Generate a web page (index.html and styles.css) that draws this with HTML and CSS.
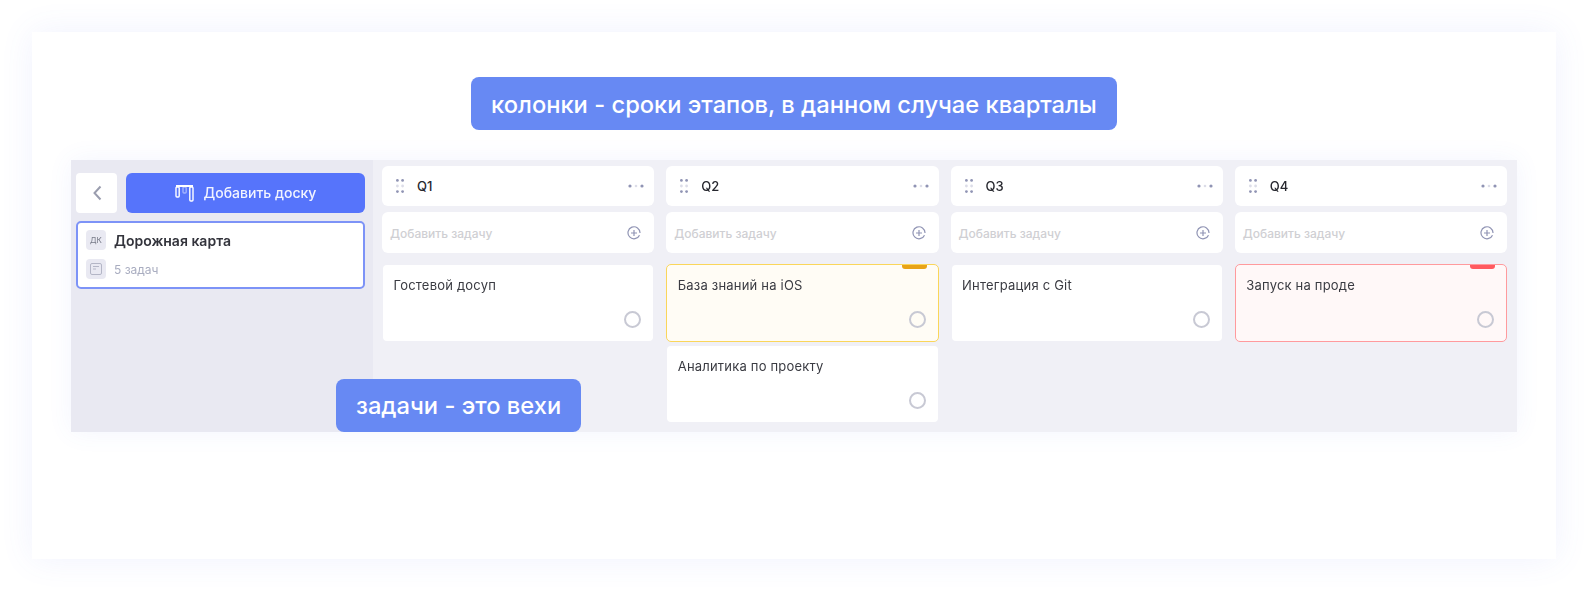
FILE: index.html
```html
<!DOCTYPE html>
<html lang="en">
  <head>
    <meta charset="UTF-8" />
    <meta name="viewport" content="width=device-width, initial-scale=1.0" />
    <title>Дорожная карта</title>
    <link rel="stylesheet" href="styles.css">
  </head>
  <body>
    <div class="canvas">
      <div class="note note-top">колонки - сроки этапов, в данном случае кварталы</div>
      <div class="board">
        <div class="sidebar">
          <div class="sidebar-top">
            <div class="back">
              <svg width="9" height="16" viewBox="0 0 9 16"><path d="M7.5 1.5 1.5 8l6 6.5" fill="none" stroke="#9a9dae" stroke-width="2"/></svg>
            </div>
            <div class="add-board">
              <svg width="19" height="18" viewBox="0 0 19 18" fill="none" stroke="#fff" stroke-width="1.4">
                <path d="M1 2h17" stroke-width="2"/>
                <rect x="1" y="3" width="3.2" height="10" rx="1"/>
                <rect x="14.8" y="3" width="3.2" height="14" rx="1"/>
                <rect x="8" y="3" width="3.2" height="6" rx="1" opacity=".45"/>
              </svg>
              <span class="add-board-label">Добавить доску</span>
            </div>
          </div>
          <div class="board-card">
            <div class="board-row">
              <span class="board-icon">ДК</span>
              <span class="board-name">Дорожная карта</span>
            </div>
            <div class="board-row">
              <span class="board-icon">
                <svg width="12" height="12" viewBox="0 0 12 12" fill="none" stroke="#b4b6c6"><rect x=".5" y=".5" width="11" height="11" rx="1.5"/><path d="M3 3.5h6M3 6h3"/></svg>
              </span>
              <span class="board-count">5 задач</span>
            </div>
          </div>
        </div>
        <div class="columns">
          <div class="column">
            <div class="col-head">
              <svg class="drag" width="8" height="14" viewBox="0 0 8 14"><g fill="#9094b4"><circle cx="1.4" cy="1.4" r="1.4"/><circle cx="6.6" cy="1.4" r="1.4"/><circle cx="1.4" cy="12.6" r="1.4"/><circle cx="6.6" cy="12.6" r="1.4"/></g><g fill="#dcdde8"><circle cx="1.4" cy="7" r="1.4"/><circle cx="6.6" cy="7" r="1.4"/></g></svg>
              <span class="col-title">Q1</span>
              <svg class="dots" width="16" height="4" viewBox="0 0 16 4"><circle cx="2" cy="2" r="1.6" fill="#9094b4"/><circle cx="8" cy="2" r="1.3" fill="#dcdde8"/><circle cx="14" cy="2" r="1.6" fill="#9094b4"/></svg>
            </div>
            <div class="add-task">
              <span>Добавить задачу</span>
              <svg width="14" height="14" viewBox="0 0 14 14" fill="none" stroke="#9094b4" stroke-width="1.2"><path d="M12.5 9.2A6 6 0 1 1 13 7M7 4v6M4 7h6"/></svg>
            </div>
            <div class="task">
              <span>Гостевой досуп</span>
              <i class="check"></i>
            </div>
          </div>
          <div class="column">
            <div class="col-head">
              <svg class="drag" width="8" height="14" viewBox="0 0 8 14"><g fill="#9094b4"><circle cx="1.4" cy="1.4" r="1.4"/><circle cx="6.6" cy="1.4" r="1.4"/><circle cx="1.4" cy="12.6" r="1.4"/><circle cx="6.6" cy="12.6" r="1.4"/></g><g fill="#dcdde8"><circle cx="1.4" cy="7" r="1.4"/><circle cx="6.6" cy="7" r="1.4"/></g></svg>
              <span class="col-title">Q2</span>
              <svg class="dots" width="16" height="4" viewBox="0 0 16 4"><circle cx="2" cy="2" r="1.6" fill="#9094b4"/><circle cx="8" cy="2" r="1.3" fill="#dcdde8"/><circle cx="14" cy="2" r="1.6" fill="#9094b4"/></svg>
            </div>
            <div class="add-task">
              <span>Добавить задачу</span>
              <svg width="14" height="14" viewBox="0 0 14 14" fill="none" stroke="#9094b4" stroke-width="1.2"><path d="M12.5 9.2A6 6 0 1 1 13 7M7 4v6M4 7h6"/></svg>
            </div>
            <div class="task task-yellow">
              <span>База знаний на iOS</span>
              <i class="check"></i>
            </div>
            <div class="task">
              <span>Аналитика по проекту</span>
              <i class="check"></i>
            </div>
          </div>
          <div class="column">
            <div class="col-head">
              <svg class="drag" width="8" height="14" viewBox="0 0 8 14"><g fill="#9094b4"><circle cx="1.4" cy="1.4" r="1.4"/><circle cx="6.6" cy="1.4" r="1.4"/><circle cx="1.4" cy="12.6" r="1.4"/><circle cx="6.6" cy="12.6" r="1.4"/></g><g fill="#dcdde8"><circle cx="1.4" cy="7" r="1.4"/><circle cx="6.6" cy="7" r="1.4"/></g></svg>
              <span class="col-title">Q3</span>
              <svg class="dots" width="16" height="4" viewBox="0 0 16 4"><circle cx="2" cy="2" r="1.6" fill="#9094b4"/><circle cx="8" cy="2" r="1.3" fill="#dcdde8"/><circle cx="14" cy="2" r="1.6" fill="#9094b4"/></svg>
            </div>
            <div class="add-task">
              <span>Добавить задачу</span>
              <svg width="14" height="14" viewBox="0 0 14 14" fill="none" stroke="#9094b4" stroke-width="1.2"><path d="M12.5 9.2A6 6 0 1 1 13 7M7 4v6M4 7h6"/></svg>
            </div>
            <div class="task">
              <span>Интеграция с Git</span>
              <i class="check"></i>
            </div>
          </div>
          <div class="column">
            <div class="col-head">
              <svg class="drag" width="8" height="14" viewBox="0 0 8 14"><g fill="#9094b4"><circle cx="1.4" cy="1.4" r="1.4"/><circle cx="6.6" cy="1.4" r="1.4"/><circle cx="1.4" cy="12.6" r="1.4"/><circle cx="6.6" cy="12.6" r="1.4"/></g><g fill="#dcdde8"><circle cx="1.4" cy="7" r="1.4"/><circle cx="6.6" cy="7" r="1.4"/></g></svg>
              <span class="col-title">Q4</span>
              <svg class="dots" width="16" height="4" viewBox="0 0 16 4"><circle cx="2" cy="2" r="1.6" fill="#9094b4"/><circle cx="8" cy="2" r="1.3" fill="#dcdde8"/><circle cx="14" cy="2" r="1.6" fill="#9094b4"/></svg>
            </div>
            <div class="add-task">
              <span>Добавить задачу</span>
              <svg width="14" height="14" viewBox="0 0 14 14" fill="none" stroke="#9094b4" stroke-width="1.2"><path d="M12.5 9.2A6 6 0 1 1 13 7M7 4v6M4 7h6"/></svg>
            </div>
            <div class="task task-red">
              <span>Запуск на проде</span>
              <i class="check"></i>
            </div>
          </div>
        </div>
        <div class="note note-tasks">задачи - это вехи</div>
      </div>
    </div>
  </body>
</html>
```

FILE: styles.css
```css
body {
  margin: 0;
  font-family: Inter, "Noto Sans", sans-serif;
  background-color: #fff;
  height: 591px;
  overflow: hidden;
}

.canvas {
  margin: 32px;
  height: 527px;
  padding-top: 45px;
  box-sizing: border-box;
  background-color: #fff;
  box-shadow: 0 0 32px rgba(92, 115, 245, 0.09);
  display: flex;
  flex-direction: column;
  align-items: center;
}

.note {
  height: 53px;
  padding: 0 20px;
  box-sizing: border-box;
  display: flex;
  align-items: center;
  background-color: #6789f3;
  border-radius: 8px;
  color: #fff;
  font-size: 23.7px;
  font-weight: 500;
  white-space: nowrap;
}

.note-top {
  flex-shrink: 0;
  padding-top: 1px;
}

.note-tasks {
  position: absolute;
  left: 265px;
  bottom: 0;
}

.board {
  position: relative;
  align-self: stretch;
  margin: 30px 39px 0;
  height: 272px;
  display: flex;
  background-color: #f0f0f6;
  box-shadow: 0 0 24px rgba(92, 115, 245, 0.07);
}

.sidebar {
  width: 302px;
  flex-shrink: 0;
  box-sizing: border-box;
  padding: 13px 8px 0 5px;
  background-color: #e9e9f2;
  filter: blur(0.4px);
}

.sidebar-top {
  display: flex;
  gap: 9px;
}

.back {
  width: 41px;
  height: 40px;
  padding-left: 2px;
  box-sizing: border-box;
  display: flex;
  align-items: center;
  justify-content: center;
  background-color: #fff;
  border-radius: 4px;
}

.add-board {
  flex: 1;
  height: 40px;
  display: flex;
  align-items: center;
  justify-content: center;
  gap: 10px;
  background-color: #5674fb;
  border-radius: 6px;
  color: #f2f4ff;
  font-size: 14px;
  font-weight: 500;
}

.add-board-label {
  margin-bottom: 2px;
}

.board-card {
  height: 68px;
  margin-top: 8px;
  box-sizing: border-box;
  padding: 7px 8px;
  display: flex;
  flex-direction: column;
  gap: 9px;
  background-color: #fff;
  border: 2px solid #7d93f7;
  border-radius: 5px;
}

.board-row {
  display: flex;
  align-items: center;
  gap: 8px;
}

.board-icon {
  width: 20px;
  height: 20px;
  display: flex;
  align-items: center;
  justify-content: center;
  background-color: #e9e9f2;
  border-radius: 4px;
  color: #777a88;
  font-size: 8px;
}

.board-name {
  font-size: 14px;
  font-weight: 600;
  color: #33343c;
}

.board-count {
  font-size: 12px;
  color: #a9adc0;
}

.columns {
  flex: 1;
  display: grid;
  grid-template-columns: repeat(4, 1fr);
  column-gap: 12px;
  padding: 6px 10px 0 9px;
  filter: blur(0.4px);
}

.column {
  display: flex;
  flex-direction: column;
  min-width: 0;
}

.col-head {
  height: 40px;
  display: flex;
  align-items: center;
  padding: 0 10px 0 14px;
  background-color: #fff;
  border-radius: 6px;
}

.col-title {
  flex: 1;
  margin-left: 13px;
  font-size: 13px;
  font-weight: 500;
  color: #26272e;
}

.add-task {
  height: 41px;
  margin-top: 6px;
  margin-bottom: 11px;
  display: flex;
  align-items: center;
  justify-content: space-between;
  padding: 1px 13px 0 8px;
  box-sizing: border-box;
  background-color: #fff;
  border-radius: 6px;
  color: #cfcfd3;
  font-size: 12px;
  font-weight: 500;
}

.task {
  position: relative;
  height: 78px;
  margin-bottom: 3px;
  box-sizing: border-box;
  padding: 11.5px 12px 13px 10.5px;
  display: flex;
  flex-direction: column;
  justify-content: space-between;
  background-color: #fff;
  background-clip: padding-box;
  border: 1.5px solid transparent;
  border-radius: 5px;
  color: #3a3b42;
  font-size: 13px;
  line-height: 16px;
  letter-spacing: 0.2px;
}

.check {
  align-self: flex-end;
  width: 17px;
  height: 17px;
  box-sizing: border-box;
  border: 2px solid #c8c9d4;
  border-radius: 50%;
}

.task-yellow {
  background-color: #fffcf5;
  border-color: #fad65a;
}

.task-red {
  background-color: #fff8f8;
  border-color: #ff9a9d;
}

.task-yellow::before,
.task-red::before {
  content: "";
  position: absolute;
  top: 0;
  right: 11px;
  width: 25px;
  height: 4px;
  border-radius: 0 0 3px 3px;
  background-color: #e8a317;
}

.task-red::before {
  background-color: #ff5a5f;
}
```
